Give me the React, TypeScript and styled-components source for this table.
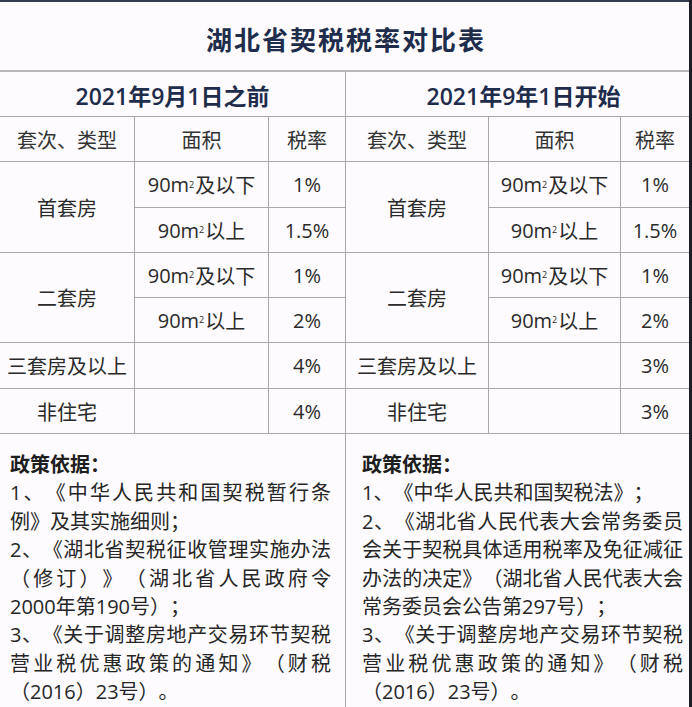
import React from "react";
import styled, { createGlobalStyle } from "styled-components";

const GlobalStyle = createGlobalStyle`
  html, body { margin: 0; padding: 0; background: #fdfafc; }
  body {
    font-family: "Open Sans", "Noto Sans CJK SC", sans-serif;
    overflow: hidden;
    text-spacing-trim: space-all;
  }
`;

const LINE = "#a9a7aa";

const Page = styled.div`
  width: 692px;
  height: 707px;
  box-sizing: border-box;
  border-right: 3px solid #1c1d27;
  background: #fdfbfd;
  display: flex;
  flex-direction: column;
  overflow: hidden;
`;

const TitleBar = styled.h1`
  margin: 0;
  height: 72px;
  flex: none;
  box-sizing: border-box;
  border-top: 2px solid #343c52;
  border-bottom: 2px solid #b9b7ba;
  display: flex;
  align-items: center;
  justify-content: center;
  padding: 5px 0 0 3px;
  font-family: "Noto Sans CJK SC", sans-serif;
  font-size: 26px;
  font-weight: 700;
  letter-spacing: 2px;
  color: #202c4b;
`;

const Columns = styled.div`
  display: grid;
  grid-template-columns: 346px 343px;
  flex: 1;
`;

const Half = styled.section<{ $divider?: boolean }>`
  display: flex;
  flex-direction: column;
  box-sizing: border-box;
  border-right: ${(p) => (p.$divider ? `1px solid ${LINE}` : "none")};
`;

const Period = styled.div<{ $shift: number }>`
  height: 45px;
  box-sizing: border-box;
  border-bottom: 1px solid ${LINE};
  display: flex;
  align-items: center;
  justify-content: center;
  font-size: 23px;
  font-weight: 600;
  color: #1f2c4c;
  padding: 1px 0 0 ${(p) => p.$shift}px;
`;

const RateGrid = styled.div<{ $cols: string }>`
  display: grid;
  grid-template-columns: ${(p) => p.$cols};
  grid-template-rows: 45px 46px 45px 45px 45px 46px 45px;
`;

const Cell = styled.div<{ $span?: number; $last?: boolean }>`
  grid-row: span ${(p) => p.$span ?? 1};
  box-sizing: border-box;
  display: flex;
  align-items: center;
  justify-content: center;
  white-space: nowrap;
  border-bottom: 1px solid ${LINE};
  border-right: ${(p) => (p.$last ? "none" : `1px solid ${LINE}`)};
  font-size: 20px;
  color: #2a2a2a;
`;

const HeadCell = styled(Cell)`
  color: #333;
`;

const Sq = styled.sup`
  font-size: 9px;
  line-height: 0;
  vertical-align: 10px;
  margin-right: 1px;
`;

const Policy = styled.div<{ $padL: number; $padR: number }>`
  padding: 17px ${(p) => p.$padR}px 0 ${(p) => p.$padL}px;
  font-size: 20px;
  line-height: 28.4px;
  color: #262626;
  text-align: justify;
`;

const PolicyTitle = styled.div`
  font-weight: 700;
  color: #1e1e1e;
`;

const PolicyItem = styled.p`
  margin: 0;
`;

type Row = { type?: string; span?: number; area?: React.ReactNode; rate: string };

const Area = ({ below }: { below: boolean }) => (
  <>
    90m<Sq>2</Sq>
    {below ? "及以下" : "以上"}
  </>
);

const Table = ({ cols, rows }: { cols: string; rows: Row[] }) => (
  <RateGrid $cols={cols}>
    <HeadCell>套次、类型</HeadCell>
    <HeadCell>面积</HeadCell>
    <HeadCell $last>税率</HeadCell>
    {rows.map((r, i) => (
      <React.Fragment key={i}>
        {r.type !== undefined && <Cell $span={r.span}>{r.type}</Cell>}
        <Cell>{r.area}</Cell>
        <Cell $last>{r.rate}</Cell>
      </React.Fragment>
    ))}
  </RateGrid>
);

const makeRows = (third: string): Row[] => [
  { type: "首套房", span: 2, area: <Area below />, rate: "1%" },
  { area: <Area below={false} />, rate: "1.5%" },
  { type: "二套房", span: 2, area: <Area below />, rate: "1%" },
  { area: <Area below={false} />, rate: "2%" },
  { type: "三套房及以上", area: null, rate: third },
  { type: "非住宅", area: null, rate: third },
];

export default function App() {
  return (
    <>
      <GlobalStyle />
      <Page>
        <TitleBar>湖北省契税税率对比表</TitleBar>
        <Columns>
          <Half $divider>
            <Period $shift={0}>2021年9月1日之前</Period>
            <Table cols="135px 134px 76px" rows={makeRows("4%")} />
            <Policy $padL={10} $padR={14}>
              <PolicyTitle>政策依据：</PolicyTitle>
              <PolicyItem>1、《中华人民共和国契税暂行条例》及其实施细则；</PolicyItem>
              <PolicyItem>2、《湖北省契税征收管理实施办法（修订）》（湖北省人民政府令2000年第190号）；</PolicyItem>
              <PolicyItem>3、《关于调整房地产交易环节契税营业税优惠政策的通知》（财税（2016）23号）。</PolicyItem>
            </Policy>
          </Half>
          <Half>
            <Period $shift={12}>2021年9年1日开始</Period>
            <Table cols="143px 132px 68px" rows={makeRows("3%")} />
            <Policy $padL={16} $padR={6}>
              <PolicyTitle>政策依据：</PolicyTitle>
              <PolicyItem>1、《中华人民共和国契税法》；</PolicyItem>
              <PolicyItem>2、《湖北省人民代表大会常务委员会关于契税具体适用税率及免征减征办法的决定》（湖北省人民代表大会常务委员会公告第297号）；</PolicyItem>
              <PolicyItem>3、《关于调整房地产交易环节契税营业税优惠政策的通知》（财税（2016）23号）。</PolicyItem>
            </Policy>
          </Half>
        </Columns>
      </Page>
    </>
  );
}
